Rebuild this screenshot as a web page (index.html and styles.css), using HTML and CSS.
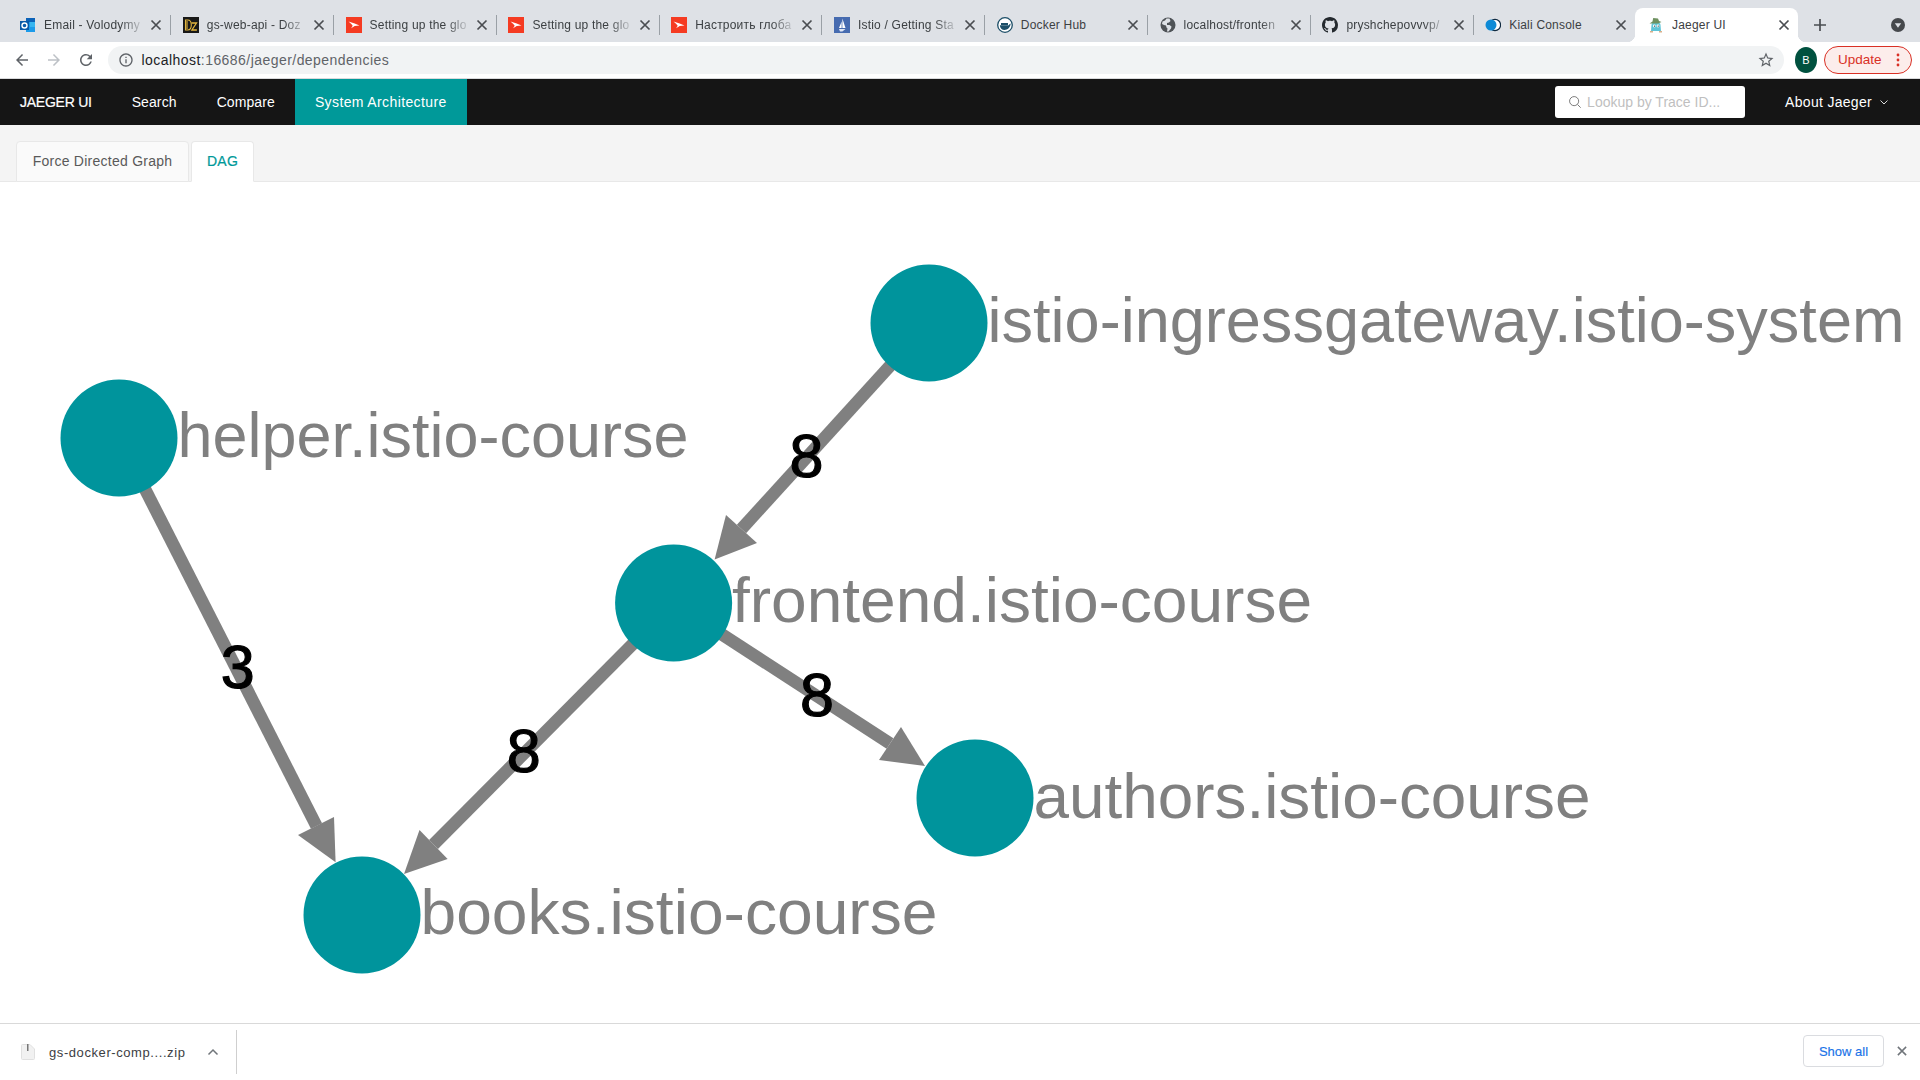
FILE: index.html
```html
<!DOCTYPE html>
<html lang="en">
<head>
<meta charset="utf-8">
<title>Jaeger UI</title>
<link rel="stylesheet" href="styles.css">
</head>
<body>
<svg class="defs" width="0" height="0" aria-hidden="true">
  <symbol id="ic-close" viewBox="0 0 16 16"><path d="M3.5 3.5l9 9M12.5 3.500l-9 9" fill="none" stroke="currentColor" stroke-width="1.7"/></symbol>
  <symbol id="ic-swoosh" viewBox="0 0 16 16"><rect width="16" height="16" fill="#f53b22"/><path d="M2.5 4.5l6.2 1.9 4.8 2-4.8.7-3.6 2.2 1.6-2.5-1.4-1.7z" fill="#fff"/></symbol>
</svg>
<div class="page">
  <header class="tabstrip">
    <div class="tab sep">
      <svg class="fav" viewBox="0 0 16 16"><path d="M6 1h9v14H6z" fill="#1c9bea"/><path d="M6 1h9v4H6z" fill="#0b62b8"/><path d="M10 5h5v5h-5z" fill="#37b6f0"/><rect y="4" width="9" height="9" fill="#0a5aa8"/><circle cx="4.5" cy="8.5" r="2.5" fill="none" stroke="#fff" stroke-width="1.4"/></svg>
      <span class="title">Email - Volodymy</span>
      <svg class="close"><use href="#ic-close"/></svg>
    </div>
    <div class="tab sep">
      <svg class="fav" viewBox="0 0 16 16"><rect width="16" height="16" fill="#181818"/><path d="M2.5 3h2.2c2.6 0 3.6 2 3.6 5s-1 5-3.6 5H2.5zM4 4v8" fill="none" stroke="#e2b53e" stroke-width="1.1"/><path d="M8.5 6h5l-4.6 7h5" fill="none" stroke="#e2b53e" stroke-width="1.3"/></svg>
      <span class="title">gs-web-api - Doz</span>
      <svg class="close"><use href="#ic-close"/></svg>
    </div>
    <div class="tab sep">
      <svg class="fav"><use href="#ic-swoosh"/></svg>
      <span class="title">Setting up the glo</span>
      <svg class="close"><use href="#ic-close"/></svg>
    </div>
    <div class="tab sep">
      <svg class="fav"><use href="#ic-swoosh"/></svg>
      <span class="title">Setting up the glo</span>
      <svg class="close"><use href="#ic-close"/></svg>
    </div>
    <div class="tab sep">
      <svg class="fav"><use href="#ic-swoosh"/></svg>
      <span class="title">Настроить глоба</span>
      <svg class="close"><use href="#ic-close"/></svg>
    </div>
    <div class="tab sep">
      <svg class="fav" viewBox="0 0 16 16"><rect width="16" height="16" fill="#466bb0"/><path d="M8.4 1.5L11.5 11H8.4z" fill="#fff"/><path d="M7.6 4.5V11H5z" fill="#fff"/><path d="M5 12h6.5L8.4 14.5H6z" fill="#dfe7f5"/></svg>
      <span class="title">Istio / Getting Sta</span>
      <svg class="close"><use href="#ic-close"/></svg>
    </div>
    <div class="tab sep">
      <svg class="fav" viewBox="0 0 16 16"><circle cx="8" cy="8" r="7.3" fill="#fff" stroke="#1d4f68" stroke-width="1.3"/><path d="M2.8 8.2h8.6c.5 0 1-.6 1.1-1.3.5.1 1 0 1.2-.3-.4 4-3 6.4-6.2 6.4-2.6 0-4.4-1.9-4.7-4.8z" fill="#1d4f68"/><path d="M4 6h7v2H4z" fill="#1d4f68"/></svg>
      <span class="title solid">Docker Hub</span>
      <svg class="close"><use href="#ic-close"/></svg>
    </div>
    <div class="tab sep">
      <svg class="fav" viewBox="0 0 16 16"><circle cx="8" cy="8" r="7.5" fill="#4f5357"/><path d="M6.5 1.5L5 3.5 2.5 4.5 2 7l2 1 2 .5.5 2 1 1-.5 3h1.500l2.500-3 .5-2-2-1.500H7V6l2-.5 1.500-1.500-1-2.500z" fill="#dee1e6"/></svg>
      <span class="title">localhost/fronten</span>
      <svg class="close"><use href="#ic-close"/></svg>
    </div>
    <div class="tab sep">
      <svg class="fav" viewBox="0 0 16 16"><path fill="#24292e" d="M8 0C3.58 0 0 3.58 0 8c0 3.54 2.29 6.53 5.47 7.59.4.07.55-.17.55-.38 0-.19-.01-.82-.01-1.49-2.01.37-2.53-.49-2.69-.94-.09-.23-.48-.94-.82-1.13-.28-.15-.68-.52-.01-.53.63-.01 1.08.58 1.23.82.72 1.21 1.87.87 2.33.66.07-.52.28-.87.51-1.07-1.78-.2-3.64-.89-3.64-3.95 0-.87.31-1.59.82-2.15-.08-.2-.36-1.02.08-2.12 0 0 .67-.21 2.2.82.64-.18 1.32-.27 2-.27.68 0 1.36.09 2 .27 1.53-1.04 2.2-.82 2.2-.82.44 1.1.16 1.92.08 2.12.51.56.82 1.27.82 2.15 0 3.07-1.87 3.75-3.65 3.95.29.25.54.73.54 1.48 0 1.07-.01 1.93-.01 2.2 0 .21.15.46.55.38A8.013 8.013 0 0 0 16 8c0-4.42-3.58-8-8-8z"/></svg>
      <span class="title">pryshchepovvvp/</span>
      <svg class="close"><use href="#ic-close"/></svg>
    </div>
    <div class="tab">
      <svg class="fav" viewBox="0 0 16 16"><circle cx="10" cy="8" r="5.6" fill="#fff" stroke="#10293f" stroke-width="1.2"/><circle cx="6" cy="8" r="5.500" fill="#0d8ad6"/></svg>
      <span class="title solid">Kiali Console</span>
      <svg class="close"><use href="#ic-close"/></svg>
    </div>
    <div class="tab active">
      <svg class="fav" viewBox="0 0 16 16"><path d="M3.500 8c0-2 1.500-2.500 4.500-2.500s4.500.5 4.500 2.500l.5 6H3z" fill="#5fc4d6"/><path d="M1.500 6.500l3-2 .7-3.500 4.800.5 1 2.500 2.500 1-3.500 1.500H5z" fill="#6f9160"/><circle cx="6.300" cy="9" r="1.400" fill="#fff"/><circle cx="10" cy="9" r="1.400" fill="#fff"/><circle cx="6.500" cy="9.100" r=".6" fill="#222"/><circle cx="10.200" cy="9.100" r=".6" fill="#222"/><path d="M2 14h3v1.500H2zM11 14h3v1.500h-3z" fill="#d9b08c"/></svg>
      <span class="title solid">Jaeger UI</span>
      <svg class="close"><use href="#ic-close"/></svg>
    </div>
    <svg class="newtab" viewBox="0 0 16 16"><path d="M8 2v12M2 8h12" fill="none" stroke="#4a4d51" stroke-width="1.7"/></svg>
    <svg class="tabmenu" viewBox="0 0 14 14"><circle cx="7" cy="7" r="7" fill="#45484c"/><path d="M3.800 5.300h6.400L7 9.800z" fill="#dee1e6"/></svg>
  </header>

  <div class="toolbar">
    <svg class="tool" viewBox="0 0 24 24"><path fill="#5f6368" d="M20 11H7.830l5.590-5.590L12 4l-8 8 8 8 1.410-1.410L7.830 13H20v-2z"/></svg>
    <svg class="tool" viewBox="0 0 24 24"><path fill="#bdc1c6" d="M4 11h12.170l-5.590-5.590L12 4l8 8-8 8-1.410-1.410L16.170 13H4v-2z"/></svg>
    <svg class="tool" viewBox="0 0 24 24"><path fill="#5f6368" d="M17.650 6.350A7.958 7.958 0 0 0 12 4c-4.420 0-7.990 3.580-7.990 8s3.570 8 7.990 8c3.730 0 6.840-2.550 7.730-6h-2.080A5.990 5.990 0 0 1 12 18c-3.310 0-6-2.690-6-6s2.690-6 6-6c1.660 0 3.140.69 4.220 1.780L13 11h7V4l-2.350 2.350z"/></svg>
    <div class="omnibox">
      <svg class="info" viewBox="0 0 24 24"><path fill="#5f6368" d="M11 7h2v2h-2zm0 4h2v6h-2zm1-9C6.480 2 2 6.480 2 12s4.480 10 10 10 10-4.480 10-10S17.520 2 12 2zm0 18c-4.410 0-8-3.590-8-8s3.590-8 8-8 8 3.590 8 8-3.590 8-8 8z"/></svg>
      <span class="url"><span class="host">localhost</span>:16686/jaeger/dependencies</span>
      <svg class="star" viewBox="0 0 24 24"><path fill="#5f6368" d="M22 9.240l-7.190-.62L12 2 9.190 8.630 2 9.240l5.460 4.730L5.820 21 12 17.270 18.180 21l-1.630-7.030L22 9.240zM12 15.400l-3.760 2.270 1-4.280-3.320-2.880 4.380-.38L12 6.100l1.710 4.040 4.380.38-3.320 2.880 1 4.280L12 15.400z"/></svg>
    </div>
    <span class="avatar">B</span>
    <div class="update">
      <span>Update</span>
      <svg class="dots" viewBox="0 0 4 16"><circle cx="2" cy="3" r="1.400"/><circle cx="2" cy="8" r="1.400"/><circle cx="2" cy="13" r="1.400"/></svg>
    </div>
  </div>

  <nav class="topnav">
    <a class="brand">JAEGER UI</a>
    <a class="navitem">Search</a>
    <a class="navitem">Compare</a>
    <a class="navitem current">System Architecture</a>
    <div class="spacer"></div>
    <div class="lookup">
      <svg class="lookup-ic" viewBox="0 0 16 16"><circle cx="7" cy="7" r="5.200" fill="none" stroke="#777" stroke-width="1.100"/><path d="M10.800 10.800l3.700 3.700" stroke="#777" stroke-width="1.100"/></svg>
      <span class="placeholder">Lookup by Trace ID...</span>
    </div>
    <a class="about">About Jaeger
      <svg class="caret" viewBox="0 0 10 10"><path d="M1.500 3.500L5 7l3.500-3.500" fill="none" stroke="#ddd" stroke-width="1"/></svg>
    </a>
  </nav>

  <div class="pagetabs">
    <div class="pagetab">Force Directed Graph</div>
    <div class="pagetab selected">DAG</div>
  </div>

  <main class="canvas">
    <svg class="graph" viewBox="0 182 1905 841" width="1905" height="841">
      <g class="edges">
        <line x1="119" y1="438" x2="316.500" y2="826"/>
        <line x1="929" y1="323" x2="741.500" y2="529"/>
        <line x1="673.600" y1="603" x2="433.500" y2="844.500"/>
        <line x1="673.600" y1="603" x2="890" y2="743.500"/>
      </g>
      <g class="arrows">
        <polygon points="335.600,862.300 298,835 334,817"/>
        <polygon points="714.600,559.400 726,515 757,543"/>
        <polygon points="404,874 419.500,830 447.600,859"/>
        <polygon points="925,766 901,727 879,760"/>
      </g>
      <g class="nodes">
        <circle cx="119" cy="438" r="58.500"/>
        <circle cx="929" cy="323" r="58.500"/>
        <circle cx="673.600" cy="603" r="58.500"/>
        <circle cx="975" cy="798" r="58.500"/>
        <circle cx="362" cy="915" r="58.500"/>
      </g>
      <g class="labels">
        <text x="177.500" y="457" textLength="511" lengthAdjust="spacingAndGlyphs">helper.istio-course</text>
        <text x="987.500" y="342" textLength="917" lengthAdjust="spacingAndGlyphs">istio-ingressgateway.istio-system</text>
        <text x="732" y="622" textLength="580" lengthAdjust="spacingAndGlyphs">frontend.istio-course</text>
        <text x="1033.500" y="817.500" textLength="557" lengthAdjust="spacingAndGlyphs">authors.istio-course</text>
        <text x="420.500" y="934" textLength="517" lengthAdjust="spacingAndGlyphs">books.istio-course</text>
      </g>
      <g class="counts">
        <text x="237.600" y="688">3</text>
        <text x="806.500" y="477">8</text>
        <text x="523.600" y="772">8</text>
        <text x="817" y="716">8</text>
      </g>
    </svg>
  </main>

  <footer class="downloads">
    <div class="dl-item">
      <svg class="dl-file" viewBox="0 0 14 16"><path d="M.5 1.500A1 1 0 0 1 1.500.5H9l4.500 4.500v9.500a1 1 0 0 1-1 1h-11a1 1 0 0 1-1-1z" fill="#f1f1f1" stroke="#e0e0e0"/><path d="M6 0h1.500v7H6z" fill="#777"/></svg>
      <span class="dl-name">gs-docker-comp....zip</span>
      <svg class="dl-chev" viewBox="0 0 12 8"><path d="M1.500 6.500L6 2l4.500 4.500" fill="none" stroke="#70757a" stroke-width="1.500"/></svg>
    </div>
    <div class="dl-sep"></div>
    <div class="spacer"></div>
    <button class="showall">Show all</button>
    <svg class="dl-close" viewBox="0 0 16 16"><path d="M2.500 2.500l11 11M13.500 2.500l-11 11" fill="none" stroke="#70757a" stroke-width="2"/></svg>
  </footer>
</div>
</body>
</html>
```

FILE: styles.css
```css
* { box-sizing: border-box; }
html, body { margin: 0; padding: 0; }
body { font-family: "Liberation Sans", Arial, sans-serif; background: #fff; overflow: hidden; }
.defs { position: absolute; }
.page { width: 1920px; height: 1080px; display: flex; flex-direction: column; }
.spacer { flex: 1; }

/* Browser tab strip */
.tabstrip { height: 42px; flex: none; background: #dee1e6; display: flex; align-items: flex-end; padding-left: 7.500px; position: relative; }
.tab { width: 162.8px; height: 34px; flex: none; display: flex; align-items: center; padding: 0 6px 0 12.500px; position: relative; color: #3c4043; font-size: 12px; letter-spacing: .2px; }
.tab.sep::after { content: ""; position: absolute; right: -1px; top: 7px; height: 20px; width: 1px; background: #9aa0a6; }
.tab.active { background: #fff; border-radius: 8px 8px 0 0; }
.tab.active::before, .tab.active::after { content: ""; position: absolute; bottom: 0; width: 8px; height: 8px; }
.tab.active::before { left: -8px; background: radial-gradient(circle at 0 0, transparent 8px, #fff 8.500px); }
.tab.active::after { right: -8px; background: radial-gradient(circle at 100% 0, transparent 8px, #fff 8.500px); }
.fav { width: 16px; height: 16px; flex: none; margin-right: 8px; }
.title { flex: 1; white-space: nowrap; overflow: hidden; -webkit-mask-image: linear-gradient(to right, #000 76%, transparent 100%); mask-image: linear-gradient(to right, #000 76%, transparent 100%); }
.title.solid { -webkit-mask-image: none; mask-image: none; }
.close { width: 16px; height: 16px; flex: none; color: #4a4d51; margin-left: 3px; }
.newtab { width: 16px; height: 16px; margin: 0 0 9px 14px; flex: none; }
.tabmenu { width: 14px; height: 14px; margin: 0 15px 10px auto; flex: none; }

/* Browser toolbar */
.toolbar { height: 37px; flex: none; background: #fff; border-bottom: 1px solid #d9dadc; display: flex; align-items: center; padding: 0 8px 1px 13px; }
.tool { width: 18px; height: 18px; flex: none; margin-right: 14px; }
.toolbar .tool:nth-child(2) { margin-right: 13.500px; }
.toolbar .tool:nth-child(3) { margin-right: 13px; }
.omnibox { flex: 1; height: 28px; background: #f1f3f4; border-radius: 14px; display: flex; align-items: center; padding: 0 9px 0 10px; }
.info { width: 16px; height: 16px; flex: none; margin-right: 8px; }
.url { flex: 1; font-size: 14px; letter-spacing: .45px; color: #5f6368; }
.host { color: #202124; }
.star { width: 18px; height: 18px; flex: none; }
.avatar { width: 22px; height: 26px; flex: none; margin: 0 7px 0 11px; border-radius: 50%; background: #00513f; color: #fff; font-size: 11px; display: flex; align-items: center; justify-content: center; }
.update { width: 88px; height: 28px; flex: none; border: 1px solid #d93025; border-radius: 14px; background: #fcedeb; color: #d93025; font-size: 13.500px; display: flex; align-items: center; justify-content: space-between; padding: 0 11px 0 13px; }
.dots { width: 4px; height: 16px; fill: #d93025; }

/* Jaeger nav */
.topnav { height: 46px; flex: none; background: #151515; display: flex; align-items: center; color: #fff; font-size: 14px; }
.brand { padding: 0 20px; letter-spacing: -.25px; -webkit-text-stroke: .2px #fff; }
.navitem { height: 46px; display: flex; align-items: center; padding: 0 20px; letter-spacing: .1px; }
.current { background: #009999; letter-spacing: .38px; }
.lookup { width: 190px; height: 32px; background: #fff; border-radius: 3px; display: flex; align-items: center; padding-left: 13px; margin-right: 40px; }
.lookup-ic { width: 14px; height: 14px; margin-right: 5px; flex: none; }
.placeholder { color: #bfbfbf; font-size: 14px; }
.about { display: flex; align-items: center; margin-right: 31px; letter-spacing: .3px; }
.caret { width: 10px; height: 10px; margin-left: 7px; }

/* Page tabs */
.pagetabs { height: 57px; flex: none; background: #f4f4f4; border-bottom: 1px solid #e8e8e8; display: flex; align-items: flex-end; padding-left: 16px; gap: 2px; }
.pagetab { height: 41px; width: 173px; margin-bottom: -1px; padding-bottom: 1px; background: #fafafa; border: 1px solid #e8e8e8; border-radius: 4px 4px 0 0; display: flex; align-items: center; justify-content: center; font-size: 14px; letter-spacing: .25px; color: #595959; }
.pagetab.selected { width: 63px; background: #fff; border-bottom-color: #fff; color: #009999; -webkit-text-stroke: .2px #009999; }

/* Graph */
.canvas { flex: 1; min-height: 0; background: #fff; }
.graph { display: block; }
.edges line { stroke: #808080; stroke-width: 12.500; }
.arrows polygon { fill: #808080; }
.nodes circle { fill: #00949c; }
.labels text { fill: #808080; font-family: "Liberation Sans", Arial, sans-serif; font-size: 63px; }
.counts text { fill: #000; stroke: #000; stroke-width: 1.200; font-family: "Liberation Sans", Arial, sans-serif; font-size: 61px; text-anchor: middle; }

/* Downloads shelf */
.downloads { height: 57px; flex: none; background: #fff; border-top: 1px solid #d9d9d9; display: flex; align-items: center; padding: 0 12px 0 21px; }
.dl-item { display: flex; align-items: center; }
.dl-file { width: 14px; height: 16px; margin-right: 14px; flex: none; }
.dl-name { font-size: 13px; letter-spacing: .58px; color: #3c4043; }
.dl-chev { width: 12px; height: 8px; margin-left: 22px; flex: none; }
.dl-sep { width: 1px; height: 44px; background: #cfcfcf; margin-left: 17px; }
.showall { width: 81px; height: 32px; margin-bottom: 2px; background: #fff; border: 1px solid #dadce0; border-radius: 4px; color: #1a73e8; font: 400 13px "Liberation Sans", Arial, sans-serif; padding: 0; margin-right: 12px; -webkit-text-stroke: .15px #1a73e8; }
.dl-close { width: 12px; height: 12px; flex: none; margin-bottom: 2px; }
```
